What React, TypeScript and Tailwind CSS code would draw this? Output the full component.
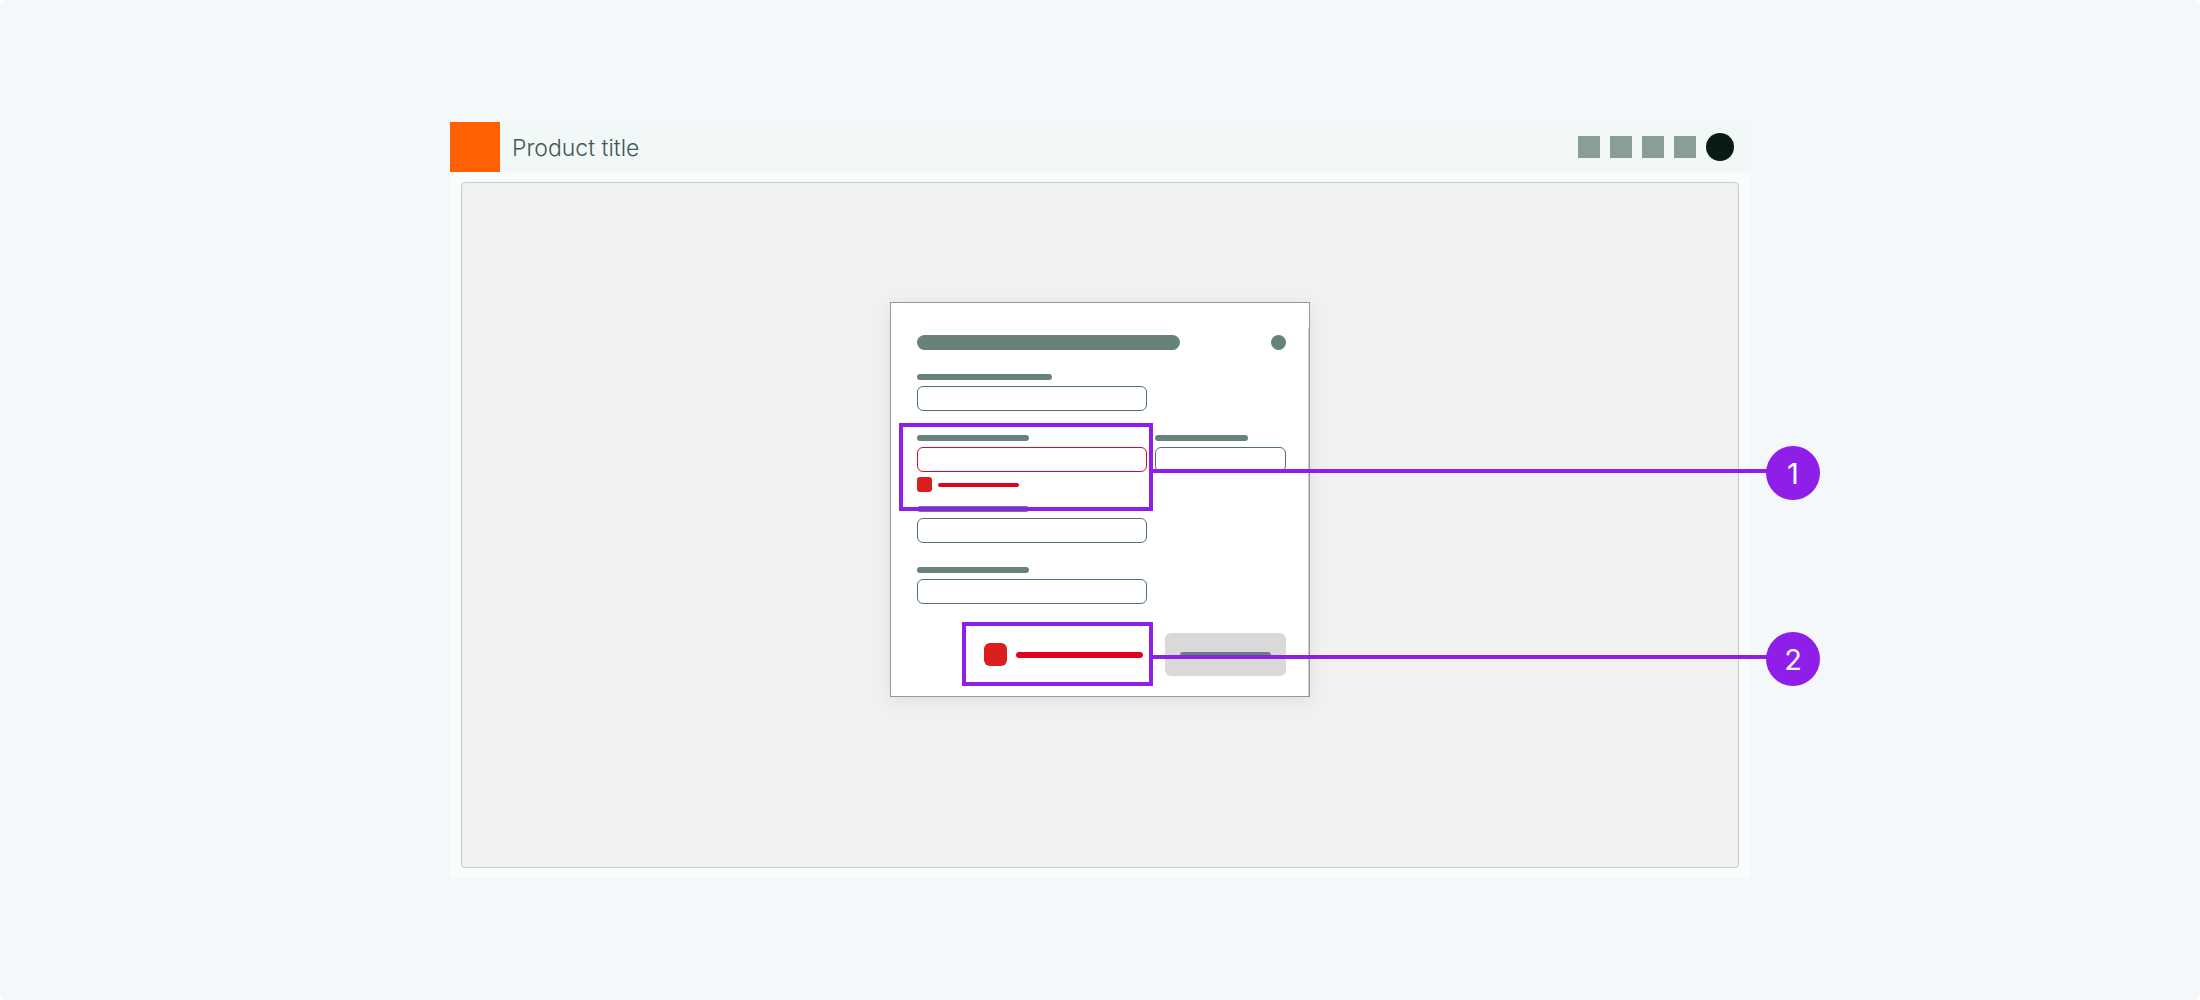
import React from "react";

interface FieldProps {
  id: string;
  name: string;
  labelClass?: string;
  className?: string;
  invalid?: boolean;
}

const Field: React.FC<FieldProps> = ({
  id,
  name,
  labelClass = "w-[112px]",
  className = "w-[230px]",
  invalid = false,
}) => (
  <div className={`flex flex-col gap-[6px] ${className}`}>
    <label
      htmlFor={id}
      aria-label={name}
      className={`block h-[6px] rounded-full bg-[#67827a] ${labelClass}`}
    />
    <input
      id={id}
      type="text"
      aria-label={name}
      aria-invalid={invalid}
      className={`block h-[25px] w-full rounded-[6px] border bg-white px-2 text-sm outline-none ${
        invalid ? "border-[#da0b2c]" : "border-[#527078]"
      }`}
    />
  </div>
);

interface CalloutProps {
  number: number;
  boxClass: string;
  lineClass: string;
  badgeClass: string;
}

const Callout: React.FC<CalloutProps> = ({
  number,
  boxClass,
  lineClass,
  badgeClass,
}) => (
  <>
    <div
      className={`pointer-events-none absolute border-4 border-[#8f1ee8] ${boxClass}`}
    />
    <div
      className={`pointer-events-none absolute left-[262px] h-1 w-[616px] bg-[#8f1ee8] ${lineClass}`}
    />
    <div
      className={`absolute left-[875px] flex size-[54px] items-center justify-center rounded-full bg-[#8f1ee8] font-['Inter',sans-serif] text-[29px] leading-none text-white ${badgeClass}`}
    >
      {number}
    </div>
  </>
);

const Header: React.FC = () => (
  <header className="flex h-[50px] items-center bg-[#f2f8f8] pr-4">
    <a href="#home" aria-label="Home" className="size-[50px] bg-[#ff6000]" />
    <h1 className="ml-3 pt-0.5 font-['Inter',sans-serif] text-[23px] leading-7 font-light text-[#3f5a53]">
      Product title
    </h1>
    <nav className="ml-auto flex items-center gap-[10px]">
      <button aria-label="Search" className="size-[22px] bg-[#8a9e98]" />
      <button aria-label="Help" className="size-[22px] bg-[#8a9e98]" />
      <button aria-label="Alerts" className="size-[22px] bg-[#8a9e98]" />
      <button aria-label="Apps" className="size-[22px] bg-[#8a9e98]" />
      <button aria-label="Account" className="size-7 rounded-full bg-[#0a1a17]" />
    </nav>
  </header>
);

const FormCard: React.FC = () => (
  <div className="relative w-[420px] border border-[#979999] bg-white shadow-[0_4px_16px_rgba(0,0,0,0.08)]">
    <form className="pt-[32px] pr-[23px] pb-[20px] pl-[26px]">
      <div className="flex items-center justify-between">
        <div className="h-[15px] w-[263px] rounded-full bg-[#67827a]" />
        <button
          type="button"
          aria-label="Close"
          className="size-[15px] rounded-full bg-[#67827a]"
        />
      </div>

      <div className="mt-6">
        <Field id="name" name="Name" labelClass="w-[135px]" />
      </div>

      <div className="mt-6 flex gap-2">
        <Field id="street" name="Street" invalid />
        <Field
          id="unit"
          name="Unit"
          labelClass="w-[93px]"
          className="w-[131px]"
        />
      </div>

      {/* Inline error */}
      <div className="mt-[5px] flex items-center gap-[6px]">
        <div className="size-[15px] rounded-[3px] bg-[#da1e1e]" />
        <div className="h-1 w-[81px] rounded-full bg-[#e00020]" />
      </div>

      <div className="mt-[14px] flex flex-col gap-6">
        <Field id="city" name="City" />
        <Field id="country" name="Country" />
      </div>

      {/* Footer */}
      <div className="mt-[29px] flex items-center justify-end">
        <div className="size-[23px] rounded-[6px] bg-[#da1e1e]" />
        <div className="ml-[9px] h-[6px] w-[127px] rounded-full bg-[#e00020]" />
        <button
          type="submit"
          disabled
          aria-label="Submit"
          className="ml-[22px] flex h-[43px] w-[121px] items-center justify-center rounded-[6px] bg-[#d9d9d9]"
        >
          <span className="h-[6px] w-[91px] rounded-full bg-[#67827a]" />
        </button>
      </div>
    </form>

    {/* Scroll edge */}
    <div className="absolute top-[25px] right-0 bottom-0 w-px bg-[#c3d0cc]" />

    <Callout
      number={1}
      boxClass="left-[8px] top-[120px] h-[88px] w-[254px]"
      lineClass="top-[166px]"
      badgeClass="top-[143px]"
    />
    <Callout
      number={2}
      boxClass="left-[71px] top-[319px] h-[64px] w-[191px]"
      lineClass="top-[352px]"
      badgeClass="top-[329px]"
    />
  </div>
);

const App: React.FC = () => {
  return (
    <div className="flex min-h-screen items-center justify-center rounded-lg bg-[#f4f8fb]">
      <div className="w-full max-w-[1300px] bg-[#f8fdfc]">
        <Header />
        <main className="px-[11px] py-[10px]">
          <div className="flex min-h-[686px] items-start justify-center rounded-[4px] border border-[#c1cecb] bg-[#f1f1f1] pt-[119px]">
            <FormCard />
          </div>
        </main>
      </div>
    </div>
  );
};

export default App;
